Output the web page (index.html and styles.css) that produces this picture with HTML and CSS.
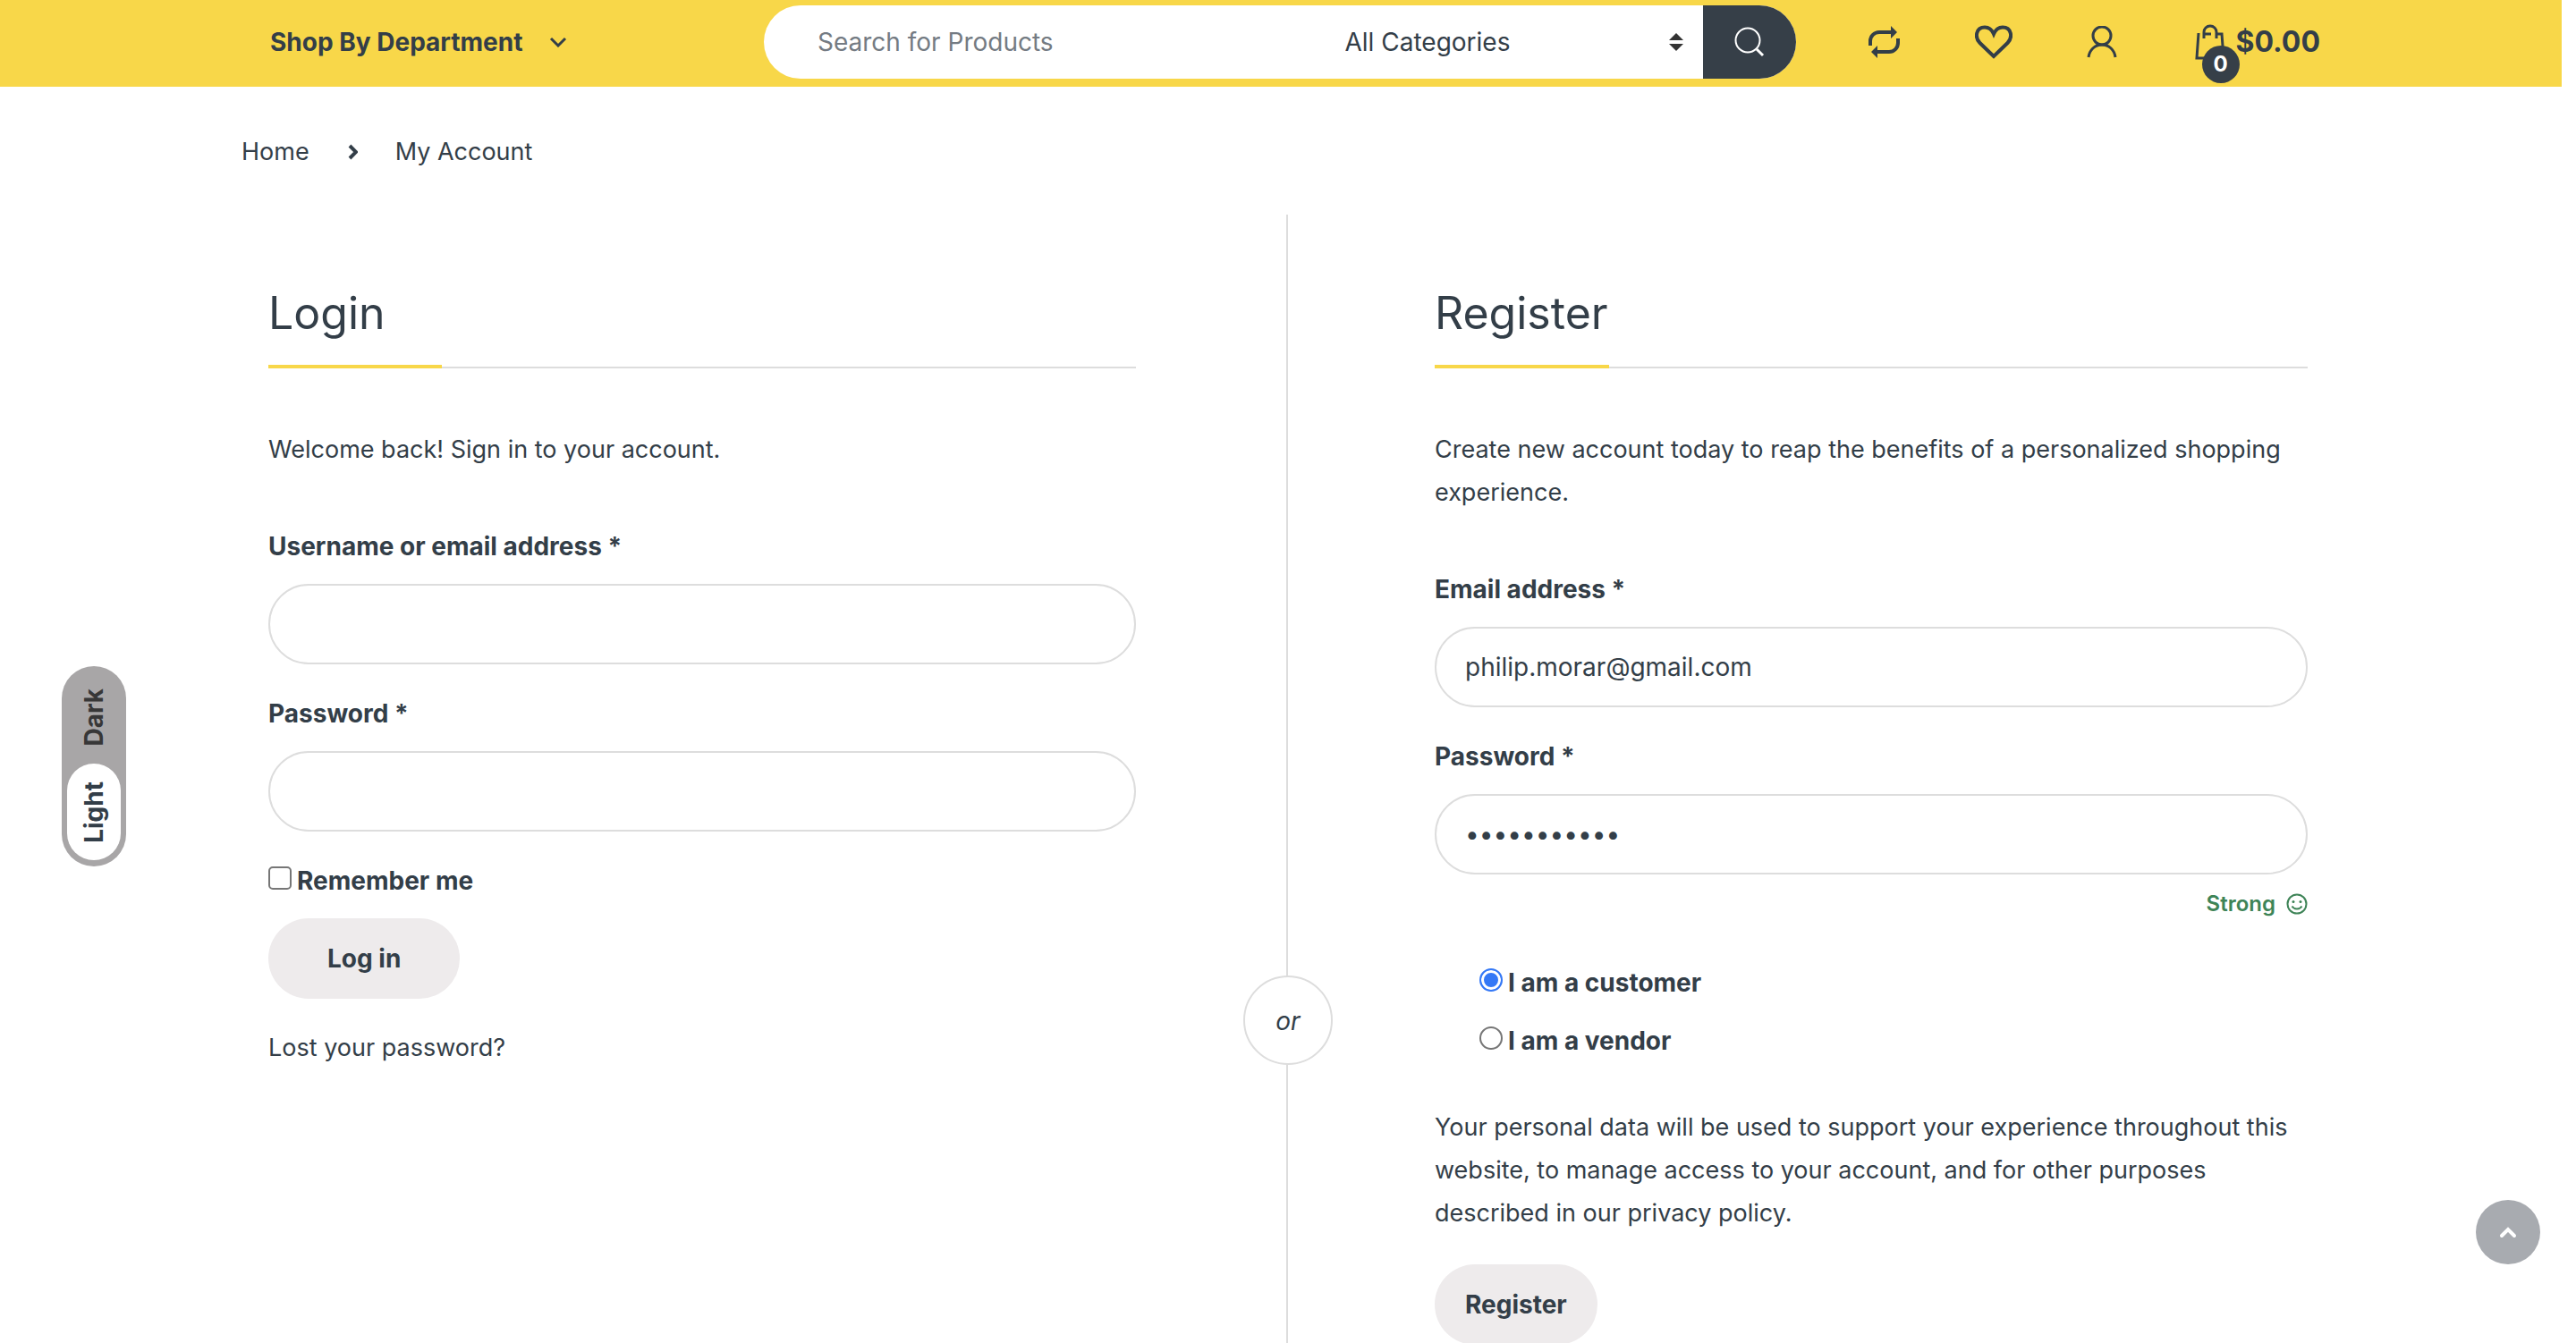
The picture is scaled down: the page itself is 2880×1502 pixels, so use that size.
FILE: index.html
```html
<!DOCTYPE html>
<html lang="en">
<head>
<meta charset="utf-8">
<meta name="viewport" content="width=device-width, initial-scale=1">
<title>My Account</title>
<link rel="stylesheet" href="styles.css">
</head>
<body>
<div class="page">
  <header class="topbar">
    <button type="button" class="departments">Shop By Department
      <svg class="chevron" viewBox="0 0 20 12" width="20" height="12" aria-hidden="true"><path d="M2 2l8 8 8-8"/></svg>
    </button>
    <form class="search" role="search">
      <input class="search-input" type="search" placeholder="Search for Products" aria-label="Search for Products">
      <select class="search-select" aria-label="Category"><option>All Categories</option></select>
      <svg class="search-carets" viewBox="0 0 16 20" width="16" height="20" aria-hidden="true"><path d="M0 8l8-8 8 8zM0 12l8 8 8-8z"/></svg>
      <button type="submit" class="search-button" aria-label="Search">
        <svg viewBox="0 0 34 34" width="34" height="34" aria-hidden="true"><circle cx="15" cy="15" r="13.5"/><path class="handle" d="M25 25l7 7"/></svg>
      </button>
    </form>
    <nav class="tools" aria-label="Account tools">
      <a href="#" aria-label="Compare"><svg viewBox="0 0 36 36" width="36" height="36"><path d="M2 22V17a10 10 0 0 1 10-10H26M33 14v5a10 10 0 0 1-10 10H9"/><path class="solid" d="M25 0l7 7-7 7zM10 22l-7 7 7 7z"/></svg></a>
      <a href="#" aria-label="Wishlist"><svg viewBox="0 0 42 38" width="42" height="38"><path d="M21 35L5.500 20C-.5 14 1 2.500 11 2.500c5 0 8.500 4 10 7.500 1.500-3.500 5-7.500 10-7.500 10 0 11.500 11.500 5.500 17.500z"/></svg></a>
      <a href="#" aria-label="My account"><svg class="thin" viewBox="0 0 34 36" width="34" height="36"><circle cx="17" cy="11" r="10"/><path d="M2 35c1-8 7-14 15-14S31 27 32 35"/></svg></a>
      <a href="#" class="cart" aria-label="Cart"><svg class="thin" viewBox="0 0 34 40" width="34" height="40"><path d="M4 10L2 38h30L30 11h-7M18 11h-8M10 16V9a7 7 0 0 1 14 0v7"/></svg><span class="badge">0</span><span class="total">$0.00</span></a>
    </nav>
  </header>

  <nav class="breadcrumb" aria-label="Breadcrumb">
    <a href="#">Home</a>
    <svg viewBox="0 0 12 18" width="12" height="18" aria-hidden="true"><path d="M3 2l7 7-7 7"/></svg>
    <span>My Account</span>
  </nav>

  <main class="account">
    <section class="panel panel-login">
      <h2 class="panel-title">Login</h2>
      <p class="intro">Welcome back! Sign in to your account.</p>
      <form class="fields">
        <div class="field">
          <label for="login-user">Username or email address *</label>
          <input id="login-user" type="text">
        </div>
        <div class="field">
          <label for="login-pass">Password *</label>
          <input id="login-pass" type="password">
        </div>
        <div class="field">
          <div class="choice"><input id="remember" type="checkbox"><label for="remember">Remember me</label></div>
          <button type="submit" class="button button-wide">Log in</button>
        </div>
        <a href="#">Lost your password?</a>
      </form>
    </section>

    <section class="panel panel-register">
      <span class="or">or</span>
      <h2 class="panel-title">Register</h2>
      <p class="intro">Create new account today to reap the benefits of a personalized shopping experience.</p>
      <form class="fields">
        <div class="field">
          <label for="reg-email">Email address *</label>
          <input id="reg-email" type="email" value="philip.morar@gmail.com">
        </div>
        <div class="field">
          <label for="reg-pass">Password *</label>
          <input id="reg-pass" type="password" value="Secret#2024">
          <div class="strength">Strong
            <svg viewBox="0 0 24 24" width="24" height="24" aria-hidden="true"><circle cx="12" cy="12" r="10.500"/><path d="M6.500 14.500c2.500 4 8.500 4 11 0"/><circle class="eye" cx="8" cy="9.500" r="1.500"/><circle class="eye" cx="16" cy="9.500" r="1.500"/></svg>
          </div>
        </div>
      </form>
      <div class="roles">
        <div class="choice"><input id="customer" type="radio" name="role" checked><label for="customer">I am a customer</label></div>
        <div class="choice"><input id="vendor" type="radio" name="role"><label for="vendor">I am a vendor</label></div>
      </div>
      <p class="privacy">Your personal data will be used to support your experience throughout this website, to manage access to your account, and for other purposes described in our privacy policy.</p>
      <button type="submit" class="button">Register</button>
    </section>
  </main>
</div>

<div class="theme">
  <button type="button" class="theme-option">Dark</button>
  <button type="button" class="theme-option theme-active">Light</button>
</div>
<button type="button" class="to-top" aria-label="Back to top"><svg viewBox="0 0 20 14" width="20" height="14"><path d="M3 11l7-7 7 7"/></svg></button>
</body>
</html>
```

FILE: styles.css
```css
* { box-sizing: border-box; }

body {
  margin: 0;
  font: 27px/48px Inter, "Liberation Sans", sans-serif;
  color: #333e48;
  background: #fff;
}

a { color: inherit; text-decoration: none; }
button, input, select { font: inherit; font-size: 28px; color: inherit; margin: 0; border: 0; padding: 0; background: none; }
button { cursor: pointer; }
svg { display: block; flex: none; fill: none; stroke: currentColor; }
h2, p { margin: 0; }

.page {
  height: 100vh;
  overflow-y: auto;
  scrollbar-width: none;
  padding-right: 16px;
  display: flex;
  flex-direction: column;
}

.topbar {
  flex: none;
  display: flex;
  align-items: center;
  padding: 6px 270px 9px 302px;
  background: #f8d749;
}

.departments { display: flex; align-items: center; gap: 30px; width: 552px; font-weight: 700; }
.chevron { stroke-width: 3; }

.search { position: relative; flex: 1; display: flex; height: 82px; border-radius: 41px; overflow: hidden; background: #fff; }
.search-input { flex: 1; min-width: 0; padding-left: 60px; outline: 0; }
.search-input::placeholder { color: #747b83; opacity: 1; }
.search-select { appearance: none; width: 400px; }
.search-carets { position: absolute; right: 126px; top: 31px; fill: #333; stroke: none; pointer-events: none; }
.search-button { width: 104px; display: flex; align-items: center; justify-content: center; color: #fff; background: #363f48; }
.search-button svg { stroke-width: 2; }
.search-button .handle { stroke-width: 3; }

.tools { display: flex; align-items: center; padding-left: 81px; }
.tools a { display: flex; align-items: center; }
.tools svg { stroke-width: 4; }
.tools .thin { stroke-width: 3; }
.tools .solid { fill: currentColor; stroke: none; }
.tools a + a { margin-left: 83px; }
.tools a + .cart { position: relative; gap: 12px; margin-left: 87px; }
.badge {
  position: absolute;
  left: 8px;
  top: 28px;
  width: 42px;
  height: 42px;
  border-radius: 50%;
  background: #363f48;
  color: #fff;
  font-size: 24px;
  font-weight: 700;
  line-height: 42px;
  text-align: center;
}
.total { font-size: 32px; font-weight: 700; }

.breadcrumb { flex: none; display: flex; align-items: center; gap: 42px; padding: 49px 270px 46px; }
.breadcrumb svg { stroke-width: 4; }

.account {
  flex: 1 0 auto;
  display: grid;
  grid-template-columns: minmax(0, 1138fr) minmax(0, 1142fr);
  padding: 0 284px 0 300px;
}
.panel { padding: 80px 0 60px; }
.panel-login { padding-right: 168px; }
.panel-register { position: relative; padding-left: 164px; border-left: 2px solid #ddd; }

.panel-title {
  position: relative;
  font-size: 50px;
  line-height: 60px;
  font-weight: 400;
  padding-bottom: 30px;
  border-bottom: 2px solid #ddd;
}
.panel-title::after {
  content: "";
  position: absolute;
  left: 0;
  bottom: -2px;
  width: 20%;
  height: 4px;
  background: #f8d749;
}
.intro { margin-top: 67px; }

.fields { display: flex; flex-direction: column; gap: 31px; margin-top: 60px; }
.field { display: flex; flex-direction: column; gap: 18px; }
label { font-size: 28px; font-weight: 700; }
.field > input {
  width: 100%;
  height: 90px;
  padding: 0 32px;
  border: 2px solid #ddd;
  border-radius: 45px;
  background: #fff;
}

.choice { display: flex; align-items: center; gap: 6px; }
.choice input {
  appearance: none;
  width: 26px;
  height: 26px;
  margin-bottom: 6px;
  border: 2px solid #767676;
  border-radius: 5px;
}
.choice input[type="radio"] { border-radius: 50%; }
.choice input:checked { border-color: #3478f6; background: #3478f6; box-shadow: inset 0 0 0 3px #fff; }
.roles { display: flex; flex-direction: column; gap: 17px; margin: 49px 0 0 50px; }

.strength { display: flex; align-items: center; justify-content: flex-end; gap: 12px; line-height: 30px; font-size: 24px; font-weight: 600; color: #3e8457; }
.strength svg { stroke-width: 2; }
.strength .eye { fill: currentColor; stroke: none; }

.privacy { margin: 49px 0 33px; }
.button { align-self: flex-start; height: 90px; padding: 0 34px; border-radius: 45px; background: #eeebec; font-weight: 700; }
.button-wide { padding: 0 66px; }

.or {
  position: absolute;
  left: -50px;
  top: 851px;
  width: 100px;
  height: 100px;
  border: 2px solid #ddd;
  border-radius: 50%;
  background: #fff;
  font-size: 28px;
  font-style: italic;
  line-height: 98px;
  text-align: center;
}

.theme {
  position: fixed;
  left: 69px;
  top: 745px;
  width: 72px;
  height: 224px;
  padding: 6px 6px 7px;
  border-radius: 36px;
  background: #a8a6a7;
  display: flex;
  flex-direction: column;
}
.theme-option { flex: 1; width: 60px; border-radius: 30px; writing-mode: sideways-lr; font-weight: 700; line-height: 60px; color: #373737; }
.theme-active { flex: none; height: 108px; background: #fff; color: #333e48; }

.to-top {
  position: fixed;
  right: 40px;
  bottom: 88px;
  width: 72px;
  height: 72px;
  border-radius: 50%;
  display: flex;
  align-items: center;
  justify-content: center;
  color: #fff;
  background: #a8abb0;
}
.to-top svg { stroke-width: 4; stroke-linecap: round; }
```
